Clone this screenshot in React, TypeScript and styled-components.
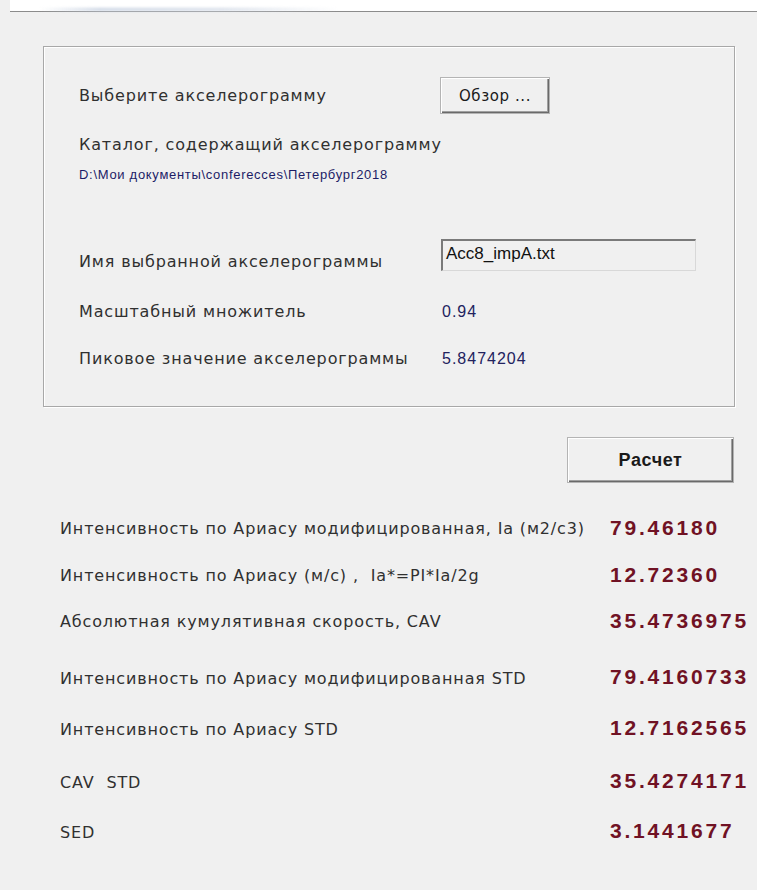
import React from 'react'
import styled, { createGlobalStyle } from 'styled-components'

const GlobalStyle = createGlobalStyle`
  html, body {
    margin: 0;
    padding: 0;
    background: #f0f0f0;
  }
  body {
    font-family: 'DejaVu Sans', 'Liberation Sans', sans-serif;
    color: #2b2b2b;
  }
`

const Page = styled.div`
  width: 757px;
  min-height: 890px;
  display: flex;
  flex-direction: column;
  background: #f0f0f0;
`

// remains of the window caption above the form
const TitleStrip = styled.div`
  height: 11px;
  background: #fff;
  border-bottom: 1px solid #8c8c8c;
  margin-left: 10px;
  display: flex;
  align-items: flex-end;
`

const TitleSmudge = styled.div`
  margin-left: 30px;
  width: 300px;
  height: 3px;
  background: linear-gradient(90deg, transparent, #c9d3e2 20%, #d6dde8 60%, transparent);
  filter: blur(1.5px);
`

const Content = styled.div`
  padding: 34px 22px 0 43px;
  display: flex;
  flex-direction: column;
`

const GroupBox = styled.div`
  height: 361px;
  box-sizing: border-box;
  border: 1px solid #a8a8a8;
  box-shadow: inset 1px 1px 0 #fff, 1px 1px 0 #fff;
  padding: 31px 0 0 35px;
  display: flex;
  flex-direction: column;
`

const FieldRow = styled.div<{ $top: number }>`
  display: grid;
  grid-template-columns: 362px auto;
  align-items: center;
  margin-top: ${(p) => p.$top}px;
`

const Label = styled.div<{ $drop?: number }>`
  font-size: 16px;
  letter-spacing: 0.85px;
  line-height: 20px;
  color: #303030;
  white-space: nowrap;
  margin-top: ${(p) => p.$drop ?? 0}px;
`

const PathText = styled.div<{ $top: number }>`
  font-family: 'Liberation Sans', Arial, sans-serif;
  font-size: 13px;
  letter-spacing: 0.7px;
  line-height: 16px;
  color: #1c1c66;
  margin-top: ${(p) => p.$top}px;
`

const Value = styled.div`
  font-family: 'Liberation Sans', Arial, sans-serif;
  font-size: 16px;
  letter-spacing: 1px;
  line-height: 20px;
  color: #22225e;
  padding-left: 1px;
`

const RaisedButton = styled.button<{ $w: number; $h: number; $bold?: boolean }>`
  width: ${(p) => p.$w}px;
  height: ${(p) => p.$h}px;
  background: #f0f0f0;
  border: none;
  box-shadow: inset 1px 1px 0 #fff, inset -1px -1px 0 #6a6a6a, inset -2px -2px 0 #a0a0a0,
    0 0 0 1px #b4b4b4;
  font-family: ${(p) => (p.$bold ? "'Liberation Sans', Arial, sans-serif" : "'DejaVu Sans', sans-serif")};
  font-size: ${(p) => (p.$bold ? 18 : 15)}px;
  font-weight: ${(p) => (p.$bold ? 700 : 400)};
  letter-spacing: 0.6px;
  color: #1a1a1a;
  padding: 0;
  cursor: default;
`

const TextField = styled.div`
  width: 255px;
  height: 32px;
  box-sizing: border-box;
  border-top: 2px solid #7a7a7a;
  border-left: 2px solid #7a7a7a;
  border-right: 1px solid #d8d8d8;
  border-bottom: 1px solid #d8d8d8;
  background: #f0f0f0;
  font-family: 'Liberation Sans', Arial, sans-serif;
  font-size: 17px;
  line-height: 26px;
  padding-left: 3px;
  color: #111;
`

const ActionBar = styled.div`
  display: flex;
  justify-content: flex-end;
  margin-top: 31px;
  padding-right: 2px;
`

const Results = styled.div`
  display: flex;
  flex-direction: column;
  padding-left: 17px;
`

const ResultRow = styled.div<{ $top: number }>`
  display: grid;
  grid-template-columns: 550px auto;
  align-items: center;
  margin-top: ${(p) => p.$top}px;
  height: 24px;
`

const ResultLabel = styled.div`
  font-size: 16px;
  letter-spacing: 0.85px;
  color: #303030;
  white-space: pre;
`

const ResultValue = styled.div<{ $lift?: number }>`
  font-family: 'Liberation Sans', Arial, sans-serif;
  font-size: 21px;
  font-weight: 700;
  letter-spacing: 2.8px;
  color: #701224;
  white-space: nowrap;
  margin-top: ${(p) => -(p.$lift ?? 0)}px;
`

const results = [
  { label: 'Интенсивность по Ариасу модифицированная, Ia (м2/с3)', value: '79.46180', top: 34, lift: 0 },
  { label: 'Интенсивность по Ариасу (м/с) ,  Ia*=PI*Ia/2g', value: '12.72360', top: 23, lift: 0 },
  { label: 'Абсолютная кумулятивная скорость, CAV', value: '35.4736975', top: 22, lift: 0 },
  { label: 'Интенсивность по Ариасу модифицированная STD', value: '79.4160733', top: 33, lift: 2 },
  { label: 'Интенсивность по Ариасу STD', value: '12.7162565', top: 27, lift: 3 },
  { label: 'CAV  STD', value: '35.4274171', top: 29, lift: 3 },
  { label: 'SED', value: '3.1441677', top: 26, lift: 3 },
]

export default function App() {
  return (
    <Page>
      <GlobalStyle />
      <TitleStrip>
        <TitleSmudge />
      </TitleStrip>
      <Content>
        <GroupBox>
          <FieldRow $top={0}>
            <Label>Выберите акселерограмму</Label>
            <RaisedButton $w={108} $h={35}>
              Обзор ...
            </RaisedButton>
          </FieldRow>
          <Label $drop={22}>Каталог, содержащий акселерограмму</Label>
          <PathText $top={12}>D:\Мои документы\conferecces\Петербург2018</PathText>
          <FieldRow $top={55}>
            <Label $drop={14} style={{ alignSelf: 'start' }}>
              Имя выбранной акселерограммы
            </Label>
            <TextField>Acc8_impA.txt</TextField>
          </FieldRow>
          <FieldRow $top={30}>
            <Label>Масштабный множитель</Label>
            <Value>0.94</Value>
          </FieldRow>
          <FieldRow $top={27}>
            <Label>Пиковое значение акселерограммы</Label>
            <Value>5.8474204</Value>
          </FieldRow>
        </GroupBox>
        <ActionBar>
          <RaisedButton $w={165} $h={44} $bold>
            Расчет
          </RaisedButton>
        </ActionBar>
        <Results>
          {results.map((r) => (
            <ResultRow key={r.label} $top={r.top}>
              <ResultLabel>{r.label}</ResultLabel>
              <ResultValue $lift={r.lift}>{r.value}</ResultValue>
            </ResultRow>
          ))}
        </Results>
      </Content>
    </Page>
  )
}
